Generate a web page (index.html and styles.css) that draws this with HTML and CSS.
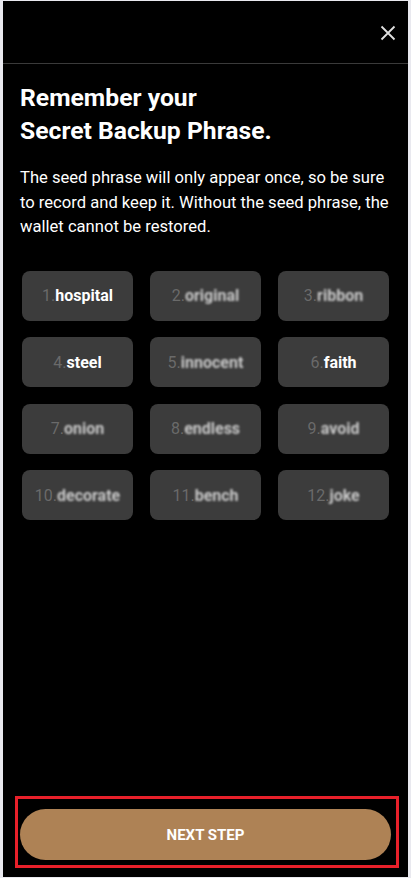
FILE: index.html
```html
<html>
<head>
  <title>Backup Phrase</title>
  <link rel="stylesheet" href="styles.css">
</head>
<body>
  <div class="panel">
    <div class="top-bar">
      <button class="close" aria-label="Close">
        <svg width="16" height="16" viewBox="0 0 16 16">
          <path d="M1.5 1.5 L14.5 14.5 M14.5 1.5 L1.5 14.5" stroke="#e0e0e0" stroke-width="1.8" fill="none"/>
        </svg>
      </button>
    </div>
    <div class="content">
      <h1>Remember your<br>Secret Backup Phrase.</h1>
      <p class="intro">The seed phrase will only appear once, so be sure to record and keep it. Without the seed phrase, the wallet cannot be restored.</p>
      <div class="words">
        <div class="word"><span class="num">1.</span><b>hospital</b></div>
        <div class="word"><span class="num">2.</span><b class="hidden">original</b></div>
        <div class="word"><span class="num">3.</span><b class="hidden">ribbon</b></div>
        <div class="word"><span class="num">4.</span><b>steel</b></div>
        <div class="word"><span class="num">5.</span><b class="hidden">innocent</b></div>
        <div class="word"><span class="num">6.</span><b>faith</b></div>
        <div class="word"><span class="num">7.</span><b class="hidden">onion</b></div>
        <div class="word"><span class="num">8.</span><b class="hidden">endless</b></div>
        <div class="word"><span class="num">9.</span><b class="hidden">avoid</b></div>
        <div class="word"><span class="num">10.</span><b class="hidden">decorate</b></div>
        <div class="word"><span class="num">11.</span><b class="hidden">bench</b></div>
        <div class="word"><span class="num">12.</span><b class="hidden">joke</b></div>
      </div>
    </div>
    <div class="footer">
      <button class="next">NEXT STEP</button>
    </div>
  </div>
</body>
</html>
```

FILE: styles.css
```css
/* fond gris clair autour du panneau noir */
body {
  margin: 0;
  background: #e9e9ef;
  font-family: Roboto, "Noto Sans", sans-serif;
  color: #fff;
}
.panel {
  margin: 1px 3px 1px 3px;
  height: 876px;
  background: #000;
  display: flex;
  flex-direction: column;
}
.top-bar {
  height: 62px;
  border-bottom: 1px solid #3a3a3a;
  display: flex;
  justify-content: flex-end;
  align-items: center;
  padding-right: 12px;
}
.close {
  background: none;
  border: none;
  padding: 0;
  width: 16px;
  height: 16px;
  margin-top: 1px;
  cursor: pointer;
}
.content {
  flex: 1;
  padding: 0 19px 0 17px;
}
h1 {
  font-size: 24.7px;
  line-height: 33px;
  font-weight: 700;
  margin: 17px 0 0 0;
}
.intro {
  font-size: 16.6px;
  line-height: 24.5px;
  margin: 19px 0 0 0;
}
/* grille des mots */
.words {
  display: grid;
  grid-template-columns: repeat(3, 1fr);
  gap: 16.5px 17px;
  margin: 31px 0 0 2px;
}
.word {
  height: 50px;
  background: #3c3c3c;
  border-radius: 8px;
  display: flex;
  align-items: center;
  justify-content: center;
  font-size: 16px;
}
.word .num {
  color: #6a6a6a;
}
.word b {
  font-weight: 700;
  color: #fff;
}
.word b.hidden {
  color: #c9c9c9;
  filter: blur(1.2px);
}
.footer {
  margin: 0 9px 9px 12px;
  border: 3px solid #e8202a;
  padding: 10px 5px 5px 2px;
}
.next {
  display: block;
  width: 100%;
  height: 51px;
  border: none;
  border-radius: 26px;
  background: #ae8255;
  color: #fff;
  font-family: Roboto, sans-serif;
  font-size: 15px;
  font-weight: 700;
  cursor: pointer;
}
```
